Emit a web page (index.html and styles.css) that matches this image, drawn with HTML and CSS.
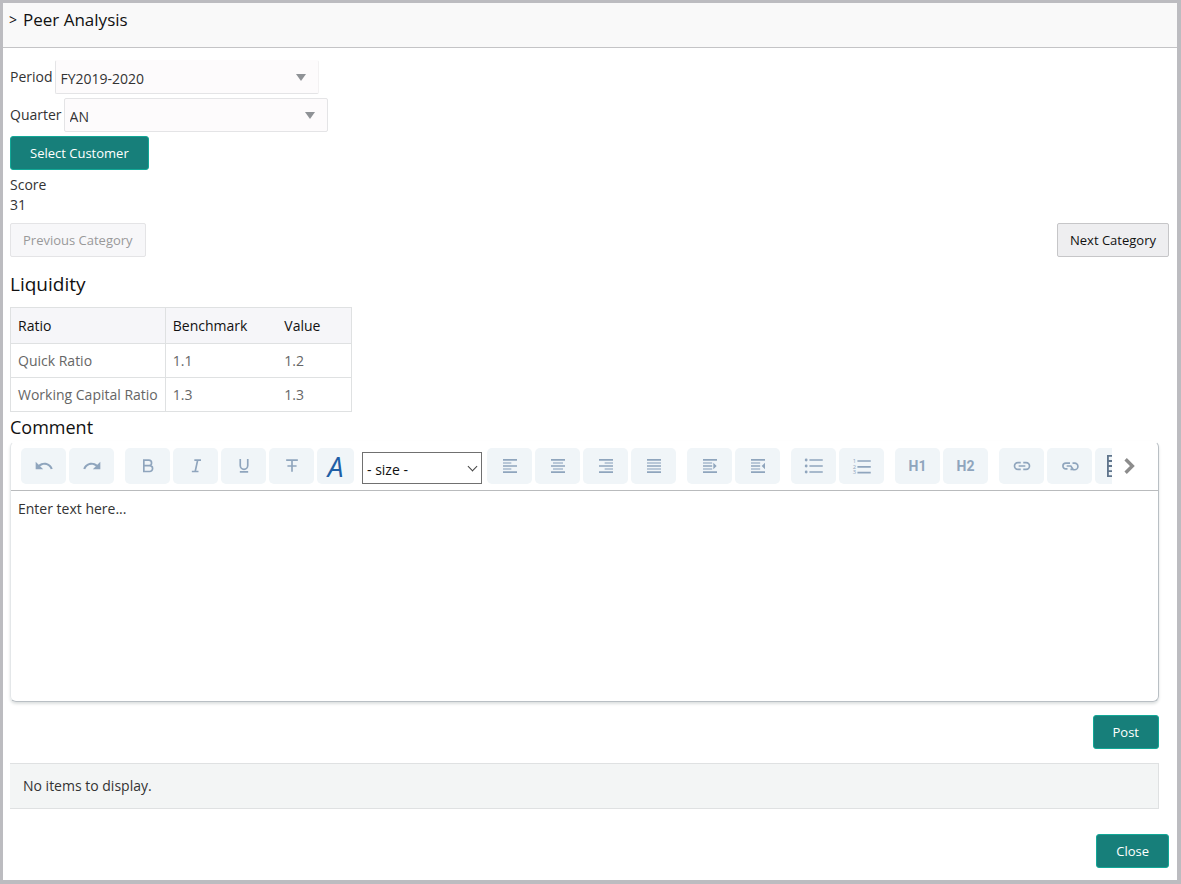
FILE: index.html
```html
<!DOCTYPE html>
<html lang="en">
<head>
    <meta charset="UTF-8">
    <meta name="viewport" content="width=device-width, initial-scale=1.0">
    <title>Peer Analysis</title>
    <link rel="stylesheet" href="styles.css">
</head>
<body>
    <header class="header">
        <span class="arrow">&gt;</span>
        <h1>Peer Analysis</h1>
    </header>

    <main>
        <div class="field">
            <label for="period">Period</label>
            <div class="select period">
                <select id="period">
                    <option>FY2019-2020</option>
                </select>
            </div>
        </div>
        <div class="field">
            <label for="quarter">Quarter</label>
            <div class="select">
                <select id="quarter">
                    <option>AN</option>
                </select>
            </div>
        </div>
        <button type="button" class="btn primary">Select Customer</button>

        <div class="score">
            <div>Score</div>
            <div>31</div>
        </div>

        <div class="categories">
            <button type="button" class="btn" disabled>Previous Category</button>
            <button type="button" class="btn">Next Category</button>
        </div>

        <h2>Liquidity</h2>
        <table>
            <thead>
                <tr><th class="name">Ratio</th><th class="benchmark">Benchmark</th><th class="value">Value</th></tr>
            </thead>
            <tbody>
                <tr><td class="name">Quick Ratio</td><td>1.1</td><td>1.2</td></tr>
                <tr><td class="name">Working Capital Ratio</td><td>1.3</td><td>1.3</td></tr>
            </tbody>
        </table>

        <section class="comment">
            <h3>Comment</h3>
            <div class="editor">
                <div class="toolbar">
                    <div class="tools">
                        <div class="group">
                            <button type="button" class="tool" aria-label="Undo"><svg viewBox="0 0 24 24"><path d="M12.5 8c-2.65 0-5.05.99-6.9 2.6L2 7v9h9l-3.62-3.62c1.39-1.16 3.16-1.88 5.12-1.88 3.54 0 6.55 2.31 7.6 5.5l2.37-.78C21.08 11.03 17.15 8 12.5 8z"/></svg></button>
                            <button type="button" class="tool" aria-label="Redo"><svg viewBox="0 0 24 24"><path d="M18.4 10.6C16.55 8.99 14.15 8 11.5 8c-4.65 0-8.58 3.03-9.96 7.22L3.9 16c1.05-3.19 4.05-5.5 7.6-5.5 1.95 0 3.73.72 5.12 1.88L13 16h9V7l-3.6 3.6z"/></svg></button>
                        </div>
                        <div class="group">
                            <button type="button" class="tool" aria-label="Bold"><svg viewBox="0 0 24 24"><path class="line" d="M7 5h6a3.300 3.300 0 0 1 0 6.600H7zM7 11.600h7a3.500 3.500 0 0 1 0 7H7z"/></svg></button>
                            <button type="button" class="tool" aria-label="Italic"><svg viewBox="0 0 24 24"><path class="line" d="M10 5h8M7 18.600h8M14 5l-3 13.600"/></svg></button>
                            <button type="button" class="tool" aria-label="Underline"><svg viewBox="0 0 24 24"><path class="line" d="M7.500 3.500v8a4.500 4.500 0 0 0 9 0v-8M7 19h10"/></svg></button>
                            <button type="button" class="tool" aria-label="Strikethrough"><svg viewBox="0 0 24 24"><path class="line" d="M5 5h14M12 5v14M6.500 12h11"/></svg></button>
                            <button type="button" class="tool font" aria-label="Font">A</button>
                        </div>
                        <div class="size">
                            <select aria-label="Size">
                                <option>- size -</option>
                            </select>
                        </div>
                        <div class="group">
                            <button type="button" class="tool" aria-label="Align left"><svg viewBox="0 0 24 24"><path class="dark" d="M3.600 3.600h16.800v2H3.600zM3.600 11h16.800v2H3.600zM3.600 18.400h16.800v2H3.600z"/><path class="light" d="M3.600 7.200h10v2.400h-10zM3.600 14.400h10v2.400h-10z"/></svg></button>
                            <button type="button" class="tool" aria-label="Align center"><svg viewBox="0 0 24 24"><path class="dark" d="M3.600 3.600h16.800v2H3.600zM3.600 11h16.800v2H3.600zM3.600 18.400h16.800v2H3.600z"/><path class="light" d="M6 7.200h12v2.400H6zM6 14.400h12v2.400H6z"/></svg></button>
                            <button type="button" class="tool" aria-label="Align right"><svg viewBox="0 0 24 24"><path class="dark" d="M3.600 3.600h16.800v2H3.600zM3.600 11h16.800v2H3.600zM3.600 18.400h16.800v2H3.600z"/><path class="light" d="M10.400 7.200h10v2.400h-10zM10.400 14.400h10v2.400h-10z"/></svg></button>
                            <button type="button" class="tool" aria-label="Justify"><svg viewBox="0 0 24 24"><path class="dark" d="M3.600 3.600h16.800v2H3.600zM3.600 11h16.800v2H3.600zM3.600 18.400h16.800v2H3.600z"/><path class="light" d="M3.600 7.200h16.800v2.400H3.600zM3.600 14.400h16.800v2.400H3.600z"/></svg></button>
                        </div>
                        <div class="group">
                            <button type="button" class="tool" aria-label="Indent"><svg viewBox="0 0 24 24"><path class="dark" d="M3.600 3.600h16.800v2H3.600zM3.600 11h11v2h-11zM3.600 18.400h16.800v2H3.600zM16 8v8l4-4z"/><path class="light" d="M3.600 7.200h11v2.400h-11zM3.600 14.400h11v2.400h-11z"/></svg></button>
                            <button type="button" class="tool" aria-label="Outdent"><svg viewBox="0 0 24 24"><path class="dark" d="M3.600 3.600h16.800v2H3.600zM3.600 11h11v2h-11zM3.600 18.400h16.800v2H3.600zM20.400 8v8l-4-4z"/><path class="light" d="M3.600 7.200h11v2.400h-11zM3.600 14.400h11v2.400h-11z"/></svg></button>
                        </div>
                        <div class="group">
                            <button type="button" class="tool" aria-label="Bulleted list"><svg viewBox="0 0 24 24"><path d="M6.500 3.800h16v2h-16zM6.500 11h16v2h-16zM6.500 18.200h16v2h-16z"/><circle cx="2.600" cy="4.800" r="1.700"/><circle cx="2.600" cy="12" r="1.700"/><circle cx="2.600" cy="19.200" r="1.700"/></svg></button>
                            <button type="button" class="tool" aria-label="Numbered list"><svg viewBox="0 0 24 24"><path d="M6.500 5h16v2h-16zM6.500 12h16v2h-16zM6.500 19h16v2h-16z"/><g class="digits"><text x="1" y="8">1</text><text x="1" y="15">2</text><text x="1" y="22">3</text></g></svg></button>
                        </div>
                        <div class="group">
                            <button type="button" class="tool heading">H1</button>
                            <button type="button" class="tool heading">H2</button>
                        </div>
                        <div class="group">
                            <button type="button" class="tool" aria-label="Link"><svg viewBox="0 0 24 24"><path class="line" d="M10.500 8H7a4 4 0 0 0 0 8h3.500M13.500 8H17a4 4 0 0 1 0 8h-3.500M8 12h8"/></svg></button>
                            <button type="button" class="tool" aria-label="Unlink"><svg viewBox="0 0 24 24"><path class="line" d="M12 8.500H7a3.500 3.500 0 0 0 0 7h2M8 12h5l3 4.500h1.500a4 4 0 0 0 0-8H15M12.500 16h3.500"/></svg></button>
                            <button type="button" class="tool" aria-label="Table"><svg class="grid" viewBox="0 0 24 24"><path class="line" d="M1 1h22v22H1zM1 6.500h22M1 12h22M1 17.500h22M8 1v22"/></svg></button>
                        </div>
                    </div>
                    <button type="button" class="next" aria-label="More tools"><svg viewBox="0 0 12 16"><path d="M3 2l6 6-6 6"/></svg></button>
                </div>
                <textarea aria-label="Comment" placeholder="Enter text here..."></textarea>
            </div>
            <div class="actions">
                <button type="button" class="btn primary">Post</button>
            </div>
            <div class="empty">No items to display.</div>
        </section>

        <div class="actions">
            <button type="button" class="btn primary">Close</button>
        </div>
    </main>
</body>
</html>
```
FILE: styles.css
```css
*{
    box-sizing: border-box;
}
html{
    background-color: white;
}
body{
    margin: 0;
    border: solid #bcbcc0;
    border-width: 3px 4px 4px 3px;
    background-color: white;
    color: #333;
    font-family: "Segoe UI", "Open Sans", "Noto Sans", sans-serif;
    font-size: 14px;
    line-height: 20px;
}
button, select, textarea{
    font-family: inherit;
    font-size: 14px;
}
h1, h2, h3{
    margin: 0;
    color: #111;
    font-weight: normal;
}
.header{
    display: flex;
    gap: 6px;
    height: 45px;
    padding: 4px 6px;
    border-bottom: 1px solid #c4c4c6;
    background-color: #f9f9f9;
}
.header .arrow{
    line-height: 26px;
    color: #111;
}
h1{
    font-size: 17px;
    line-height: 26px;
}
main{
    padding: 12px 8px 12px 7px;
}

/* Filters */
.field{
    display: flex;
    align-items: center;
    gap: 2px;
    height: 34px;
    margin-bottom: 4px;
}
.select{
    position: relative;
    width: 264px;
}
.select select{
    appearance: none;
    width: 100%;
    height: 34px;
    padding: 2px 5px 0;
    border: 1px solid #e4e4e6;
    border-radius: 2px;
    background-color: #fdfbfc;
    color: #333;
}
.select.period select{
    border-color: #fdfbfc #f3f1f2 #e4e4e6 #e4e4e6;
}
.select::after{
    content: "";
    position: absolute;
    top: 14px;
    right: 13px;
    border: 5px solid transparent;
    border-top: 7px solid #8f9296;
    border-bottom: 0;
    pointer-events: none;
}

.btn{
    height: 34px;
    padding: 0 12px;
    border: 1px solid #c6c6c8;
    border-radius: 2px;
    background-color: #eeeef0;
    color: #111;
    font-size: 13px;
}
.btn:disabled{
    border-color: #e4e4e6;
    background-color: #f7f7f9;
    color: #999;
}
.btn.primary{
    padding: 0 19px;
    border-color: #12a897;
    border-radius: 3px;
    background-color: #177f7a;
    color: white;
}
.score{
    margin: 5px 0 8px;
}
.categories{
    display: flex;
    justify-content: space-between;
}

h2{
    margin: 12px 0 8px;
    font-size: 19px;
    line-height: 30px;
}
table{
    border-collapse: collapse;
    border: 1px solid #dfe1e2;
}
th, td{
    height: 34px;
    padding: 0 7px;
    border-bottom: 1px solid #dfe1e2;
    text-align: left;
    font-weight: normal;
}
th{
    height: 36px;
    background-color: #f6f6f9;
    color: #111;
}
td{
    color: #666;
}
.name{
    border-right: 1px solid #dfe1e2;
}
.benchmark{
    width: 112px;
}
.value{
    width: 74px;
}

/* Comment editor */
.comment{
    margin-right: 10px;
}
h3{
    margin-top: 2px;
    font-size: 18px;
    line-height: 27px;
}
.editor{
    border: 1px solid #b9bfc4;
    border-left-color: #e4e7e9;
    border-top-color: transparent;
    border-radius: 6px;
    box-shadow: 0 2px 3px #dde0e0;
}
.toolbar{
    display: flex;
    align-items: center;
    gap: 10px;
    height: 49px;
    padding-left: 10px;
    border-bottom: 1px solid #b9bbbd;
}
.tools{
    display: flex;
    flex: 1;
    align-items: center;
    min-width: 0;
    overflow: hidden;
}
.group{
    display: flex;
    flex: none;
    gap: 3px;
    margin-right: 11px;
}
.tool{
    display: flex;
    align-items: center;
    justify-content: center;
    width: 45px;
    height: 36px;
    padding: 0;
    border: 0;
    border-radius: 5px;
    background-color: #f0f5f8;
    color: #8fa5bd;
}
.tool svg{
    width: 20px;
    height: 20px;
    fill: currentColor;
}
.tool .line{
    fill: none;
    stroke: currentColor;
    stroke-width: 2;
}
.tool .light{
    fill: #b9c8d8;
}
.tool .grid{
    width: 22px;
    height: 22px;
    color: #60758c;
}
.digits{
    font-size: 7px;
}
.tool.font{
    width: 37px;
    color: #1f5fa6;
    font-size: 28px;
    font-style: italic;
}
.tool.heading{
    font-family: Roboto, sans-serif;
    font-size: 14px;
    font-weight: bold;
}
.size{
    position: relative;
    flex: none;
    margin: 4px 5px 0 -3px;
}
.size select{
    appearance: none;
    display: block;
    width: 120px;
    height: 32px;
    padding: 2px 4px 0;
    border: 1px solid #707070;
    border-radius: 0;
    background-color: white;
    color: #111;
}
.size::after{
    content: "";
    position: absolute;
    top: 11px;
    right: 6px;
    width: 6px;
    height: 6px;
    border: solid #444;
    border-width: 0 1px 1px 0;
    transform: rotate(45deg);
    pointer-events: none;
}
.next{
    width: 36px;
    height: 36px;
    padding: 0;
    border: 0;
    background: none;
    text-align: left;
}
.next svg{
    display: block;
    width: 14px;
    height: 18px;
    fill: none;
    stroke: #8c8c8c;
    stroke-width: 3;
}
textarea{
    display: block;
    width: 100%;
    height: 210px;
    padding: 8px 7px;
    border: 0;
    border-radius: 6px;
    background: none;
    color: #333;
    line-height: 20px;
    resize: none;
}
textarea::placeholder{
    color: #333;
}
.actions{
    display: flex;
    justify-content: flex-end;
}
.comment .actions{
    margin: 13px 0 14px;
}
.empty{
    margin-bottom: 25px;
    padding: 12px 13px;
    border: 1px solid #dfe1e2;
    border-left: 0;
    background-color: #f3f5f5;
}
```
